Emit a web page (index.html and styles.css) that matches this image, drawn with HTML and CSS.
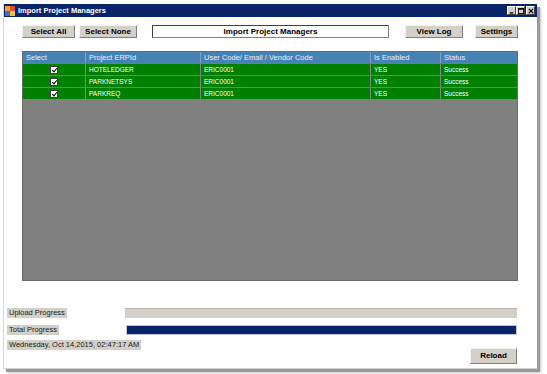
FILE: index.html
```html
<!DOCTYPE html>
<html>
<head>
<meta charset="utf-8">
<link rel="stylesheet" href="styles.css">
</head>
<body>
<div class="window">
  <div class="titlebar">
    <span class="appicon"><i class="q1"></i><i class="q2"></i><i class="q3"></i><i class="q4"></i></span>
    <span class="title">Import Project Managers</span>
    <span class="controls">
      <span class="ctl"><svg width="7" height="7" viewBox="0 0 7 7"><rect x="1" y="5" width="4" height="1.5" fill="#000"/></svg></span>
      <span class="ctl"><svg width="7" height="7" viewBox="0 0 7 7"><rect x="0.5" y="0.5" width="6" height="6" fill="none" stroke="#000"/><rect x="0.5" y="0.5" width="6" height="1.5" fill="#000"/></svg></span>
      <span class="ctl close"><svg width="7" height="7" viewBox="0 0 7 7"><path d="M1 1L6 6M6 1L1 6" stroke="#000" stroke-width="1.4"/></svg></span>
    </span>
  </div>
  <div class="content">
    <div class="toolbar">
      <button class="btn btn-all">Select All</button>
      <button class="btn btn-none">Select None</button>
      <div class="heading">Import Project Managers</div>
      <button class="btn btn-log">View Log</button>
      <button class="btn btn-set">Settings</button>
    </div>
    <div class="grid">
      <div class="row head">
        <div class="c c1">Select</div>
        <div class="c c2">Project ERPId</div>
        <div class="c c3">User Code/ Email / Vendor Code</div>
        <div class="c c4">Is Enabled</div>
        <div class="c c5">Status</div>
      </div>
      <div class="row data">
        <div class="c c1 center"><span class="chk"></span></div>
        <div class="c c2">HOTELEDGER</div>
        <div class="c c3">ERIC0001</div>
        <div class="c c4">YES</div>
        <div class="c c5">Success</div>
      </div>
      <div class="row data">
        <div class="c c1 center"><span class="chk"></span></div>
        <div class="c c2">PARKNETSYS</div>
        <div class="c c3">ERIC0001</div>
        <div class="c c4">YES</div>
        <div class="c c5">Success</div>
      </div>
      <div class="row data">
        <div class="c c1 center"><span class="chk"></span></div>
        <div class="c c2">PARKREQ</div>
        <div class="c c3">ERIC0001</div>
        <div class="c c4">YES</div>
        <div class="c c5">Success</div>
      </div>
    </div>
    <div class="progress">
      <div class="prow">
        <span class="label">Upload Progress</span>
        <div class="bar bar-upload"></div>
      </div>
      <div class="prow prow2">
        <span class="label">Total Progress</span>
        <div class="bar bar-total"></div>
      </div>
      <div class="footer">
        <span class="label date">Wednesday, Oct 14,2015, 02:47:17 AM</span>
        <button class="btn btn-reload">Reload</button>
      </div>
    </div>
  </div>
</div>
</body>
</html>
```
FILE: styles.css
```css
* { box-sizing: border-box; }
html, body { margin: 0; padding: 0; background: #ffffff; }
body {
  width: 547px;
  height: 374px;
  overflow: hidden;
  font-family: "Liberation Sans", Arial, sans-serif;
}
.window {
  margin: 4px 0 0 3px;
  width: 534px;
  height: 365px;
  background: #fff;
  border-left: 1px solid #d8d8d8;
  border-bottom: 1px solid #d0d0d0;
  box-shadow: 3px 3px 0 #9a9a9a, 4px 4px 2px #c8c8c8;
  display: flex;
  flex-direction: column;
}
.titlebar {
  height: 13px;
  background: #0a246a;
  display: flex;
  align-items: center;
  padding: 0 2px 0 1px;
}
.appicon {
  width: 10px;
  height: 10px;
  display: grid;
  grid-template-columns: 1fr 1fr;
  grid-template-rows: 1fr 1fr;
  margin-right: 3px;
}
.appicon i { display: block; }
.q1 { background: #f0a030; }
.q2 { background: #e05030; }
.q3 { background: #3070d0; }
.q4 { background: #f0c040; }
.title {
  color: #fff;
  font-weight: bold;
  font-size: 7.5px;
  flex: 1;
}
.controls { display: flex; gap: 0; }
.ctl {
  width: 9px;
  height: 9px;
  background: #d4d0c8;
  border: 1px solid;
  border-color: #fff #404040 #404040 #fff;
  display: flex;
  align-items: center;
  justify-content: center;
}
.ctl svg { width: 6px; height: 6px; }
.close { margin-left: 1px; }
.content {
  flex: 1;
  display: flex;
  flex-direction: column;
}
.toolbar {
  display: flex;
  align-items: center;
  margin-top: 7px;
  padding-left: 18px;
  height: 14px;
}
.btn {
  font-family: "Liberation Sans", Arial, sans-serif;
  font-weight: bold;
  font-size: 8px;
  color: #000;
  background: #d4d0c8;
  border: 1px solid;
  border-color: #f4f4f4 #808080 #808080 #f4f4f4;
  padding: 0;
  height: 13px;
  line-height: 11px;
  text-align: center;
}
.btn-all { width: 53px; }
.btn-none { width: 58px; margin-left: 4px; }
.heading {
  width: 237px;
  height: 13px;
  margin-left: 15px;
  border: 1px solid #404040;
  border-right-color: #808080;
  border-bottom-color: #808080;
  font-weight: bold;
  font-size: 8px;
  line-height: 11px;
  text-align: center;
}
.btn-log { width: 58px; margin-left: 16px; }
.btn-set { width: 43px; margin-left: 12px; }
.grid {
  margin: 13px 0 0 18px;
  width: 496px;
  height: 230px;
  background: #808080;
  border: 1px solid #6a6a6a;
}
.row {
  display: grid;
  grid-template-columns: 63px 115px 170px 70px 1fr;
  height: 12px;
}
.head {
  background: #4682b4;
  color: #e8eef8;
  font-size: 7.5px;
  height: 11px;
}
.data {
  background: #008000;
  color: #fff;
  font-size: 6.5px;
  border-top: 1px solid #4a9a4a;
}
.c {
  padding-left: 3px;
  line-height: 11px;
  border-right: 1px solid #7a8a7a;
  white-space: nowrap;
  overflow: hidden;
}
.head .c { border-right-color: #8aa0b8; line-height: 11px; }
.c5 { border-right: none; }
.center {
  display: flex;
  align-items: center;
  justify-content: center;
  padding-left: 0;
}
.chk {
  width: 8px;
  height: 8px;
  background: #fff;
  border: 1px solid #404040;
  position: relative;
}
.chk::after {
  content: "";
  position: absolute;
  left: 2px;
  top: 0px;
  width: 2px;
  height: 4px;
  border: solid #000;
  border-width: 0 1.5px 1.5px 0;
  transform: rotate(40deg);
}
.progress {
  margin-top: 26px;
  padding: 0 20px 0 3px;
  display: flex;
  flex-direction: column;
}
.prow {
  display: flex;
  align-items: center;
  height: 11px;
}
.prow2 { margin-top: 6px; }
.label {
  background: #d4d0c8;
  font-size: 7.5px;
  color: #202020;
  line-height: 10px;
  padding: 0 2px;
}
.bar {
  height: 10px;
  margin-left: auto;
  width: 392px;
}
.bar-upload {
  background: #d4d0c8;
  border-top: 1px solid #b8b4ac;
}
.bar-total {
  background: #0a246a;
  border: 1px solid #c0c8d8;
  width: 391px;
}
.footer {
  display: flex;
  justify-content: space-between;
  align-items: flex-start;
  margin-top: 5px;
}
.date { margin-top: 0; }
.btn-reload {
  width: 47px;
  height: 16px;
  line-height: 14px;
  margin-top: 8px;
}
```
